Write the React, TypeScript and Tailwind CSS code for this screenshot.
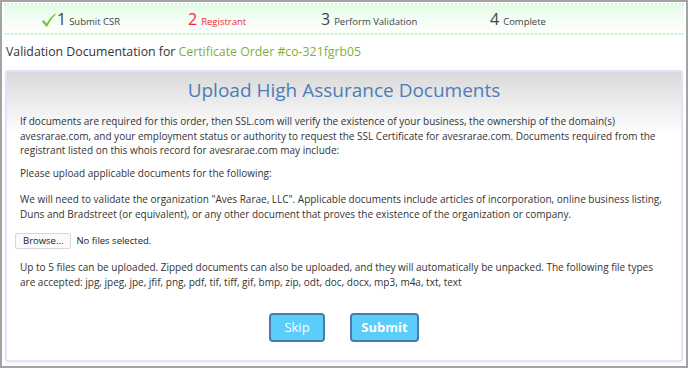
import React from 'react'

const steps = [
  { num: '1', label: 'Submit CSR', done: true, active: false },
  { num: '2', label: 'Registrant', done: false, active: true },
  { num: '3', label: 'Perform Validation', done: false, active: false },
  { num: '4', label: 'Complete', done: false, active: false },
]

export default function App() {
  return (
    <div
      className="w-[688px] h-[368px] overflow-hidden border-2 border-[#a3a3a3] bg-white text-[#333]"
      style={{ fontFamily: '"Open Sans", "Liberation Sans", sans-serif' }}
    >
      {/* Step bar */}
      <div className="mx-[2px] mt-[1px] h-[32px] border-y-2 border-dotted border-[#cdf5d2] bg-gradient-to-b from-[#e6fbe8] to-white flex items-center">
        <div className="flex items-center w-full pl-[37px] pt-[2px]">
          {steps.map((s, i) => (
            <div
              key={s.num}
              className={`flex items-baseline ${i === 0 ? 'w-[147px]' : i === 1 ? 'w-[133px]' : i === 2 ? 'w-[169px]' : ''}`}
            >
              {s.done && (
                <svg width="15" height="14" viewBox="0 0 15 14" className="mr-[1px] self-center">
                  <path
                    d="M0.8 8.2 L2.8 7 L5.6 10.4 C7.8 6.2 10.8 2.6 14.6 0.4 L14.9 1.4 C11.6 4.2 8.6 8.4 6.4 13.6 L5 13.6 Z"
                    fill="#7cc33b"
                  />
                </svg>
              )}
              <span
                className={`text-[16px] leading-none ${s.done ? 'mr-[3px]' : 'mr-[4px]'} ${
                  s.active ? 'text-[#f2283a]' : 'text-[#444]'
                }`}
              >
                {s.num}
              </span>
              <span className={`text-[9.5px] ${s.active ? 'text-[#f2283a]' : 'text-[#444]'}`}>{s.label}</span>
            </div>
          ))}
        </div>
      </div>

      <div className="px-[4px] pt-[8px] pb-[9px] text-[12.3px] leading-[18px] text-[#333]">
        Validation Documentation for <span className="text-[#7db136]">Certificate Order #co-321fgrb05</span>
      </div>

      {/* Panel */}
      <div className="mx-[3px] h-[292px] border-2 border-[#e4e2f7] rounded-[3px] bg-[linear-gradient(to_bottom,#d9d9d9,#ffffff_62px)] shadow-[0_1px_2px_rgba(0,0,0,0.08)]">
        <div className="pt-[4px] text-center text-[19px] leading-[28px] text-[#4c7db8]">
          Upload High Assurance Documents
        </div>
        <div className="mt-[10px] px-[13px] text-[10px] leading-[14.5px] text-[#333]">
          <p>
            If documents are required for this order, then SSL.com will verify the existence of your business, the
            ownership of the domain(s) avesrarae.com, and your employment status or authority to request the SSL
            Certificate for avesrarae.com. Documents required from the registrant listed on this whois record for
            avesrarae.com may include:
          </p>
          <p className="mt-[8px]">Please upload applicable documents for the following:</p>
          <p className="mt-[12px]">
            We will need to validate the organization "Aves Rarae, LLC". Applicable documents include articles of
            incorporation, online business listing, Duns and Bradstreet (or equivalent), or any other document that
            proves the existence of the organization or company.
          </p>
          <div className="mt-[12px] -ml-[5px] flex items-center gap-[5px]">
            <span className="px-[7px] h-[16px] flex items-center bg-[#fafafa] border border-[#d8d8d8] rounded-[2px] text-[9.5px] text-[#222]">
              Browse...
            </span>
            <span className="text-[9.5px] text-[#222]">No files selected.</span>
          </div>
          <p className="mt-[11px]">
            Up to 5 files can be uploaded. Zipped documents can also be uploaded, and they will automatically be
            unpacked. The following file types are accepted: jpg, jpeg, jpe, jfif, png, pdf, tif, tiff, gif, bmp,
            zip, odt, doc, docx, mp3, m4a, txt, text
          </p>
          <div className="mt-[24px] flex justify-center gap-[25px]">
            <button className="w-[56px] h-[29px] rounded-[4px] border-2 border-[#4f78ad] bg-[#5bcdfb] text-white text-[13px]">
              Skip
            </button>
            <button className="w-[69px] h-[29px] rounded-[4px] border-2 border-[#4f78ad] bg-[#5bcdfb] text-white text-[13px] font-bold">
              Submit
            </button>
          </div>
        </div>
      </div>
    </div>
  )
}
